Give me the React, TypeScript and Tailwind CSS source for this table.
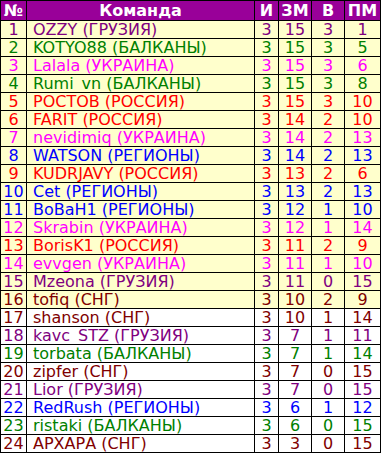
import React from 'react';

type Row = { name: string; color: string; g: number; zm: number; v: number; pm: number };

const PURPLE = 'text-[#800080]';
const GREEN = 'text-[#008000]';
const PINK = 'text-[#ff00ff]';
const RED = 'text-[#ff0000]';
const BLUE = 'text-[#0000ff]';
const BROWN = 'text-[#800000]';

const rows: Row[] = [
  { name: 'OZZY (ГРУЗИЯ)', color: PURPLE, g: 3, zm: 15, v: 3, pm: 1 },
  { name: 'KOTYO88 (БАЛКАНЫ)', color: GREEN, g: 3, zm: 15, v: 3, pm: 5 },
  { name: 'Lalala (УКРАИНА)', color: PINK, g: 3, zm: 15, v: 3, pm: 6 },
  { name: 'Rumi_vn (БАЛКАНЫ)', color: GREEN, g: 3, zm: 15, v: 3, pm: 8 },
  { name: 'РОСТОВ (РОССИЯ)', color: RED, g: 3, zm: 15, v: 3, pm: 10 },
  { name: 'FARIT (РОССИЯ)', color: RED, g: 3, zm: 14, v: 2, pm: 10 },
  { name: 'nevidimiq (УКРАИНА)', color: PINK, g: 3, zm: 14, v: 2, pm: 13 },
  { name: 'WATSON (РЕГИОНЫ)', color: BLUE, g: 3, zm: 14, v: 2, pm: 13 },
  { name: 'KUDRJAVY (РОССИЯ)', color: RED, g: 3, zm: 13, v: 2, pm: 6 },
  { name: 'Cet (РЕГИОНЫ)', color: BLUE, g: 3, zm: 13, v: 2, pm: 13 },
  { name: 'BoBaH1 (РЕГИОНЫ)', color: BLUE, g: 3, zm: 12, v: 1, pm: 10 },
  { name: 'Skrabin (УКРАИНА)', color: PINK, g: 3, zm: 12, v: 1, pm: 14 },
  { name: 'BorisK1 (РОССИЯ)', color: RED, g: 3, zm: 11, v: 2, pm: 9 },
  { name: 'evvgen (УКРАИНА)', color: PINK, g: 3, zm: 11, v: 1, pm: 10 },
  { name: 'Mzeona (ГРУЗИЯ)', color: PURPLE, g: 3, zm: 11, v: 0, pm: 15 },
  { name: 'tofiq (СНГ)', color: BROWN, g: 3, zm: 10, v: 2, pm: 9 },
  { name: 'shanson (СНГ)', color: BROWN, g: 3, zm: 10, v: 1, pm: 14 },
  { name: 'kavc_STZ (ГРУЗИЯ)', color: PURPLE, g: 3, zm: 7, v: 1, pm: 11 },
  { name: 'torbata (БАЛКАНЫ)', color: GREEN, g: 3, zm: 7, v: 1, pm: 14 },
  { name: 'zipfer (СНГ)', color: BROWN, g: 3, zm: 7, v: 0, pm: 15 },
  { name: 'Lior (ГРУЗИЯ)', color: PURPLE, g: 3, zm: 7, v: 0, pm: 15 },
  { name: 'RedRush (РЕГИОНЫ)', color: BLUE, g: 3, zm: 6, v: 1, pm: 12 },
  { name: 'ristaki (БАЛКАНЫ)', color: GREEN, g: 3, zm: 6, v: 0, pm: 15 },
  { name: 'АРХАРА (СНГ)', color: BROWN, g: 3, zm: 3, v: 0, pm: 15 },
];

const cell = 'border-r border-b border-black flex items-center overflow-hidden whitespace-nowrap';
const head = 'border-r border-b border-black flex items-center justify-center h-[20px] text-white font-bold bg-[#990099]';

export default function App() {
  return (
    <div className="w-[381px] bg-white font-['DejaVu_Sans',sans-serif] text-[16px] leading-none">
      <div className="grid grid-cols-[26px_228px_24px_33px_33px_36px] border-l border-t border-black">
        <div className={head}>№</div>
        <div className={head}>Команда</div>
        <div className={head}>И</div>
        <div className={head}>ЗМ</div>
        <div className={head}>В</div>
        <div className={head}>ПМ</div>
        {rows.map((r, i) => {
          const bg = i < 16 ? 'bg-[#ffffcc]' : 'bg-white';
          const base = `${cell} ${bg} ${r.color} h-[18px]`;
          return (
            <React.Fragment key={i}>
              <div className={`${base} justify-center`}>{i + 1}</div>
              <div className={`${base} pl-[6px]`}>{r.name}</div>
              <div className={`${base} justify-center`}>{r.g}</div>
              <div className={`${base} justify-center`}>{r.zm}</div>
              <div className={`${base} justify-center`}>{r.v}</div>
              <div className={`${base} justify-center`}>{r.pm}</div>
            </React.Fragment>
          );
        })}
      </div>
    </div>
  );
}
